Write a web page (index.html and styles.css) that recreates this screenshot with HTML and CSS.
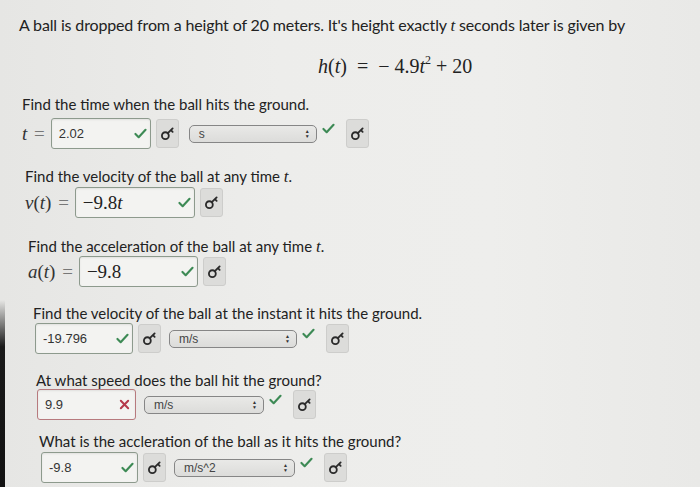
FILE: index.html
```html
<!DOCTYPE html>
<html>
<head>
<meta charset="utf-8">
<link rel="stylesheet" href="styles.css">
</head>
<body>
<div class="edge"></div>
<div class="page">
  <p class="intro">A ball is dropped from a height of 20 meters. It's height exactly <i class="mi">t</i> seconds later is given by</p>
  <div class="formula"><i>h</i>(<i>t</i>) <span class="eq">=</span> &minus; 4.9<i>t</i><sup>2</sup> + 20</div>

  <div class="q q1">
    <p class="qt">Find the time when the ball hits the ground.</p>
    <div class="row">
      <span class="lbl"><i>t</i> <span class="eqs">=</span></span>
      <div class="inp w100"><span class="val">2.02</span><svg class="ok" viewBox="0 0 14 12"><path d="M1.5 6.5 L5 10 L12.5 2"/></svg></div>
      <button class="key"><svg viewBox="0 0 14 14"><circle cx="5" cy="9" r="3.2"/><path d="M7.3 6.7 L11.8 2.2 M10.2 3.8 L11.8 5.4"/></svg></button>
      <div class="sel w128 first"><span>s</span><span class="arr">&#9650;<br>&#9660;</span></div>
      <svg class="ok out" viewBox="0 0 14 12"><path d="M1.5 6.5 L5 10 L12.5 2"/></svg>
      <button class="key"><svg viewBox="0 0 14 14"><circle cx="5" cy="9" r="3.2"/><path d="M7.3 6.7 L11.8 2.2 M10.2 3.8 L11.8 5.4"/></svg></button>
    </div>
  </div>

  <div class="q q2">
    <p class="qt">Find the velocity of the ball at any time <i class="mi">t</i>.</p>
    <div class="row">
      <span class="lbl"><i>v</i>(<i>t</i>) <span class="eqs">=</span></span>
      <div class="inp w120"><span class="mval">&minus;9.8<i>t</i></span><svg class="ok" viewBox="0 0 14 12"><path d="M1.5 6.5 L5 10 L12.5 2"/></svg></div>
      <button class="key"><svg viewBox="0 0 14 14"><circle cx="5" cy="9" r="3.2"/><path d="M7.3 6.7 L11.8 2.2 M10.2 3.8 L11.8 5.4"/></svg></button>
    </div>
  </div>

  <div class="q q3">
    <p class="qt">Find the acceleration of the ball at any time <i class="mi">t</i>.</p>
    <div class="row">
      <span class="lbl"><i>a</i>(<i>t</i>) <span class="eqs">=</span></span>
      <div class="inp w119"><span class="mval">&minus;9.8</span><svg class="ok" viewBox="0 0 14 12"><path d="M1.5 6.5 L5 10 L12.5 2"/></svg></div>
      <button class="key"><svg viewBox="0 0 14 14"><circle cx="5" cy="9" r="3.2"/><path d="M7.3 6.7 L11.8 2.2 M10.2 3.8 L11.8 5.4"/></svg></button>
    </div>
  </div>

  <div class="q q4">
    <p class="qt">Find the velocity of the ball at the instant it hits the ground.</p>
    <div class="row">
      <div class="inp w98"><span class="val">-19.796</span><svg class="ok" viewBox="0 0 14 12"><path d="M1.5 6.5 L5 10 L12.5 2"/></svg></div>
      <button class="key"><svg viewBox="0 0 14 14"><circle cx="5" cy="9" r="3.2"/><path d="M7.3 6.7 L11.8 2.2 M10.2 3.8 L11.8 5.4"/></svg></button>
      <div class="sel w128"><span>m/s</span><span class="arr">&#9650;<br>&#9660;</span></div>
      <svg class="ok out" viewBox="0 0 14 12"><path d="M1.5 6.5 L5 10 L12.5 2"/></svg>
      <button class="key"><svg viewBox="0 0 14 14"><circle cx="5" cy="9" r="3.2"/><path d="M7.3 6.7 L11.8 2.2 M10.2 3.8 L11.8 5.4"/></svg></button>
    </div>
  </div>

  <div class="q q5">
    <p class="qt">At what speed does the ball hit the ground?</p>
    <div class="row">
      <div class="inp w99 bad"><span class="val">9.9</span><svg class="no" viewBox="0 0 12 12"><path d="M2 2 L10 10 M10 2 L2 10"/></svg></div>
      <div class="sel w120"><span>m/s</span><span class="arr">&#9650;<br>&#9660;</span></div>
      <svg class="ok out" viewBox="0 0 14 12"><path d="M1.5 6.5 L5 10 L12.5 2"/></svg>
      <button class="key"><svg viewBox="0 0 14 14"><circle cx="5" cy="9" r="3.2"/><path d="M7.3 6.7 L11.8 2.2 M10.2 3.8 L11.8 5.4"/></svg></button>
    </div>
  </div>

  <div class="q q6">
    <p class="qt">What is the accleration of the ball as it hits the ground?</p>
    <div class="row">
      <div class="inp w97"><span class="val">-9.8</span><svg class="ok" viewBox="0 0 14 12"><path d="M1.5 6.5 L5 10 L12.5 2"/></svg></div>
      <button class="key"><svg viewBox="0 0 14 14"><circle cx="5" cy="9" r="3.2"/><path d="M7.3 6.7 L11.8 2.2 M10.2 3.8 L11.8 5.4"/></svg></button>
      <div class="sel w121"><span>m/s^2</span><span class="arr">&#9650;<br>&#9660;</span></div>
      <svg class="ok out" viewBox="0 0 14 12"><path d="M1.5 6.5 L5 10 L12.5 2"/></svg>
      <button class="key"><svg viewBox="0 0 14 14"><circle cx="5" cy="9" r="3.2"/><path d="M7.3 6.7 L11.8 2.2 M10.2 3.8 L11.8 5.4"/></svg></button>
    </div>
  </div>
</div>
</body>
</html>
```
FILE: styles.css
```css
html, body {
  margin: 0;
  padding: 0;
}
body {
  width: 700px;
  height: 487px;
  overflow: hidden;
  background: linear-gradient(90deg, #e6e6e4 0%, #ededeb 40%, #eeeeec 70%, #e9e9e7 100%);
  font-family: Lato, "Open Sans", sans-serif;
  color: #222;
  position: relative;
}
.edge {
  position: absolute;
  left: 0;
  top: 300px;
  width: 5px;
  height: 187px;
  background: linear-gradient(180deg, rgba(20,20,20,0) 0%, #1a1a1a 25%, #111 100%);
}
.page {
  padding-top: 15px;
}
p { margin: 0; }
.intro {
  margin-left: 19px;
  font-size: 16px;
  line-height: 20px;
  letter-spacing: -0.15px;
}
.mi {
  font-family: "Liberation Serif", serif;
  font-style: italic;
  font-size: 17px;
}
.formula {
  margin-left: 318px;
  margin-top: 19px;
  font-family: "Liberation Serif", serif;
  font-size: 20px;
  line-height: 22px;
  height: 22px;
  color: #222;
}
.formula sup {
  font-size: 12px;
  line-height: 0;
  vertical-align: 9px;
}
.formula .eq { padding: 0 5px; }
.q .qt {
  font-size: 15px;
  line-height: 18px;
  height: 18px;
}
.q1 { margin: 18px 0 0 22px; }
.q2 { margin: 18px 0 0 25px; }
.q3 { margin: 19px 0 0 28px; }
.q4 { margin: 17px 0 0 33px; }
.q5 { margin: 17px 0 0 36px; }
.q6 { margin: 12px 0 0 39px; }
.row {
  display: flex;
  align-items: center;
  height: 31px;
}
.q1 .row { margin-top: 5px; }
.q2 .row { margin-top: 2px; }
.q3 .row { margin-top: 1px; }
.q4 .row { margin-top: 1px; margin-left: 2px; }
.q5 .row { margin-top: 0; margin-left: 1px; }
.q6 .row { margin-top: 2px; margin-left: 2px; }
.lbl {
  font-family: "Liberation Serif", serif;
  font-size: 19px;
  color: #333;
  margin-right: 6px;
  white-space: nowrap;
}
.lbl .eqs { color: #777; margin-left: 2px; }
.inp {
  box-sizing: border-box;
  height: 31px;
  border: 1px solid #8d9a8d;
  border-radius: 3px;
  background: #f3f3f1;
  box-shadow: inset 0 1px 2px rgba(0,0,0,0.08);
  display: flex;
  align-items: center;
  justify-content: space-between;
  padding: 0 3px 0 7px;
}
.inp.bad { border-color: #b77a7e; }
.w97 { width: 97px; }
.w98 { width: 98px; }
.w99 { width: 99px; }
.w100 { width: 100px; }
.w119 { width: 119px; }
.w120 { width: 120px; }
.w121 { width: 121px; }
.w128 { width: 128px; }
.val {
  font-family: "Liberation Sans", Arial, sans-serif;
  font-size: 13px;
  color: #333;
}
.mval {
  font-family: "Liberation Serif", serif;
  font-size: 19px;
  color: #222;
}
svg.ok {
  width: 13px;
  height: 11px;
  fill: none;
  stroke: #3d8a55;
  stroke-width: 2.3;
  stroke-linecap: round;
  stroke-linejoin: round;
  flex: none;
}
svg.ok.out {
  align-self: flex-start;
  margin: 5px 6px 0 5px;
}
svg.no {
  width: 11px;
  height: 11px;
  fill: none;
  stroke: #b5384a;
  stroke-width: 2.2;
  stroke-linecap: round;
  margin-right: 2px;
  flex: none;
}
.key {
  box-sizing: border-box;
  width: 23px;
  height: 29px;
  margin-left: 5px;
  padding: 0;
  border: 1px solid #cdcdcb;
  border-radius: 3px;
  background: #dcdcda;
  display: flex;
  align-items: center;
  justify-content: center;
}
.key svg {
  width: 15px;
  height: 15px;
  fill: none;
  stroke: #2a2a2a;
  stroke-width: 1.7;
  stroke-linecap: round;
}
.sel {
  box-sizing: border-box;
  height: 18px;
  margin-left: 8px;
  border: 1px solid #868686;
  border-radius: 5px;
  background: linear-gradient(180deg, #e9e9e7, #dcdcda);
  display: flex;
  align-items: center;
  justify-content: space-between;
  padding: 0 6px 0 9px;
  font-family: "Liberation Sans", Arial, sans-serif;
  font-size: 12px;
  color: #444;
}
.sel.first { margin-left: 10px; }
.arr {
  font-size: 5px;
  line-height: 5px;
  text-align: center;
  color: #333;
}
```
